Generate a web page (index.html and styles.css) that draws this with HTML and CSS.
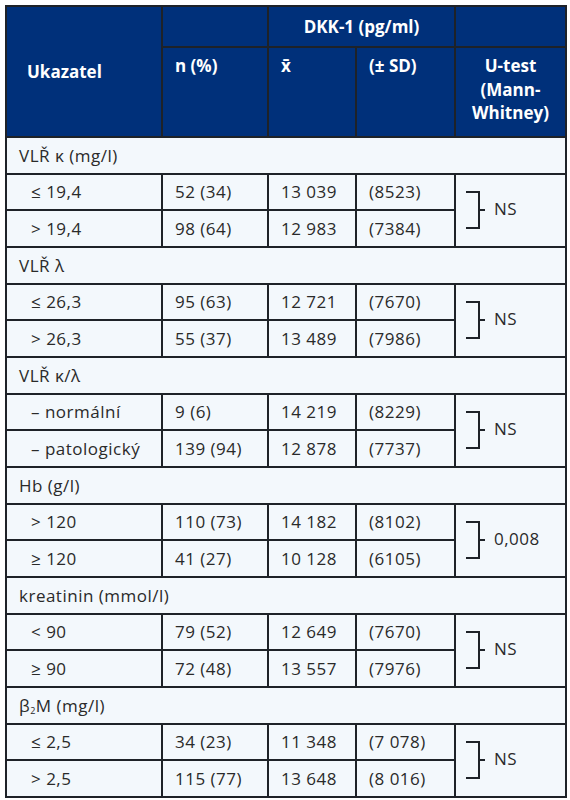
FILE: index.html
```html
<!DOCTYPE html>
<html lang="cs">
<head>
  <meta charset="UTF-8" />
  <title>DKK-1</title>
  <link rel="stylesheet" href="styles.css">
</head>
<body>
  <table class="data">
    <colgroup>
      <col class="c-label">
      <col class="c-n">
      <col class="c-mean">
      <col class="c-sd">
      <col class="c-test">
    </colgroup>
    <thead>
      <tr class="head-top">
        <th rowspan="2" class="label-col">Ukazatel</th>
        <th></th>
        <th colspan="2" class="center">DKK-1 (pg/ml)</th>
        <th></th>
      </tr>
      <tr class="head-sub">
        <th>n (%)</th>
        <th>x̄</th>
        <th>(± SD)</th>
        <th class="center">U-test<br>(Mann-<br>Whitney)</th>
      </tr>
    </thead>
    <tbody>
      <tr class="group"><td colspan="5">VLŘ κ (mg/l)</td></tr>
      <tr>
        <td class="sub">≤ 19,4</td><td>52 (34)</td><td>13 039</td><td>(8523)</td>
        <td rowspan="2" class="test"><span class="bracket"></span>NS</td>
      </tr>
      <tr>
        <td class="sub">&gt; 19,4</td><td>98 (64)</td><td>12 983</td><td>(7384)</td>
      </tr>

      <tr class="group"><td colspan="5">VLŘ λ</td></tr>
      <tr>
        <td class="sub">≤ 26,3</td><td>95 (63)</td><td>12 721</td><td>(7670)</td>
        <td rowspan="2" class="test"><span class="bracket"></span>NS</td>
      </tr>
      <tr>
        <td class="sub">&gt; 26,3</td><td>55 (37)</td><td>13 489</td><td>(7986)</td>
      </tr>

      <tr class="group"><td colspan="5">VLŘ κ/λ</td></tr>
      <tr>
        <td class="sub">– normální</td><td>9 (6)</td><td>14 219</td><td>(8229)</td>
        <td rowspan="2" class="test"><span class="bracket"></span>NS</td>
      </tr>
      <tr>
        <td class="sub">– patologický</td><td>139 (94)</td><td>12 878</td><td>(7737)</td>
      </tr>

      <tr class="group"><td colspan="5">Hb (g/l)</td></tr>
      <tr>
        <td class="sub">&gt; 120</td><td>110 (73)</td><td>14 182</td><td>(8102)</td>
        <td rowspan="2" class="test"><span class="bracket"></span>0,008</td>
      </tr>
      <tr>
        <td class="sub">≥ 120</td><td>41 (27)</td><td>10 128</td><td>(6105)</td>
      </tr>

      <tr class="group"><td colspan="5">kreatinin (mmol/l)</td></tr>
      <tr>
        <td class="sub">&lt; 90</td><td>79 (52)</td><td>12 649</td><td>(7670)</td>
        <td rowspan="2" class="test"><span class="bracket"></span>NS</td>
      </tr>
      <tr>
        <td class="sub">≥ 90</td><td>72 (48)</td><td>13 557</td><td>(7976)</td>
      </tr>

      <tr class="group"><td colspan="5">β<sub>2</sub>M (mg/l)</td></tr>
      <tr>
        <td class="sub">≤ 2,5</td><td>34 (23)</td><td>11 348</td><td>(7 078)</td>
        <td rowspan="2" class="test"><span class="bracket"></span>NS</td>
      </tr>
      <tr>
        <td class="sub">&gt; 2,5</td><td>115 (77)</td><td>13 648</td><td>(8 016)</td>
      </tr>
    </tbody>
  </table>
</body>
</html>
```

FILE: styles.css
```css
:root {
  --head: #00307a;
  --body: #f3f8fc;
  --line: #1e2228;
  --text: #2a2a2a;
}

* {
  margin: 0;
  padding: 0;
  box-sizing: border-box;
}

body {
  background: #ffffff;
  padding: 5px 0 0 5px;
  font-family: 'Open Sans', sans-serif;
  font-size: 17px;
  color: var(--text);
}

.data {
  width: 560px;
  border-collapse: collapse;
  table-layout: fixed;
  background: var(--body);
}

.c-label { width: 156px; }
.c-n { width: 106px; }
.c-mean { width: 88px; }
.c-sd { width: 99px; }
.c-test { width: 111px; }

.data th,
.data td {
  border: 2px solid var(--line);
  text-align: left;
  font-weight: normal;
  padding: 0 12px;
}

.data td {
  letter-spacing: 0.5px;
}

thead th {
  background: var(--head);
  color: #ffffff;
  font-weight: bold !important;
  line-height: 23.5px;
}

.head-top th {
  height: 41px;
  vertical-align: middle;
}

.head-top .label-col {
  padding-left: 20px;
}

.head-sub th {
  height: 90px;
  vertical-align: top;
  padding-top: 6px;
}

.data .center {
  text-align: center;
}

tbody tr {
  height: 36.67px;
}

.data td.sub {
  padding-left: 24px;
}

sub {
  font-size: 9px;
  vertical-align: -2px;
  line-height: 0;
}

.data td.test {
  padding-left: 10px;
}

.bracket {
  display: inline-block;
  position: relative;
  vertical-align: middle;
  width: 14px;
  height: 38px;
  margin-right: 14px;
  border: 2px solid var(--line);
  border-left: none;
}

.bracket::after {
  content: "";
  position: absolute;
  left: 12px;
  top: 16px;
  width: 7px;
  height: 2px;
  background: var(--line);
}
```
